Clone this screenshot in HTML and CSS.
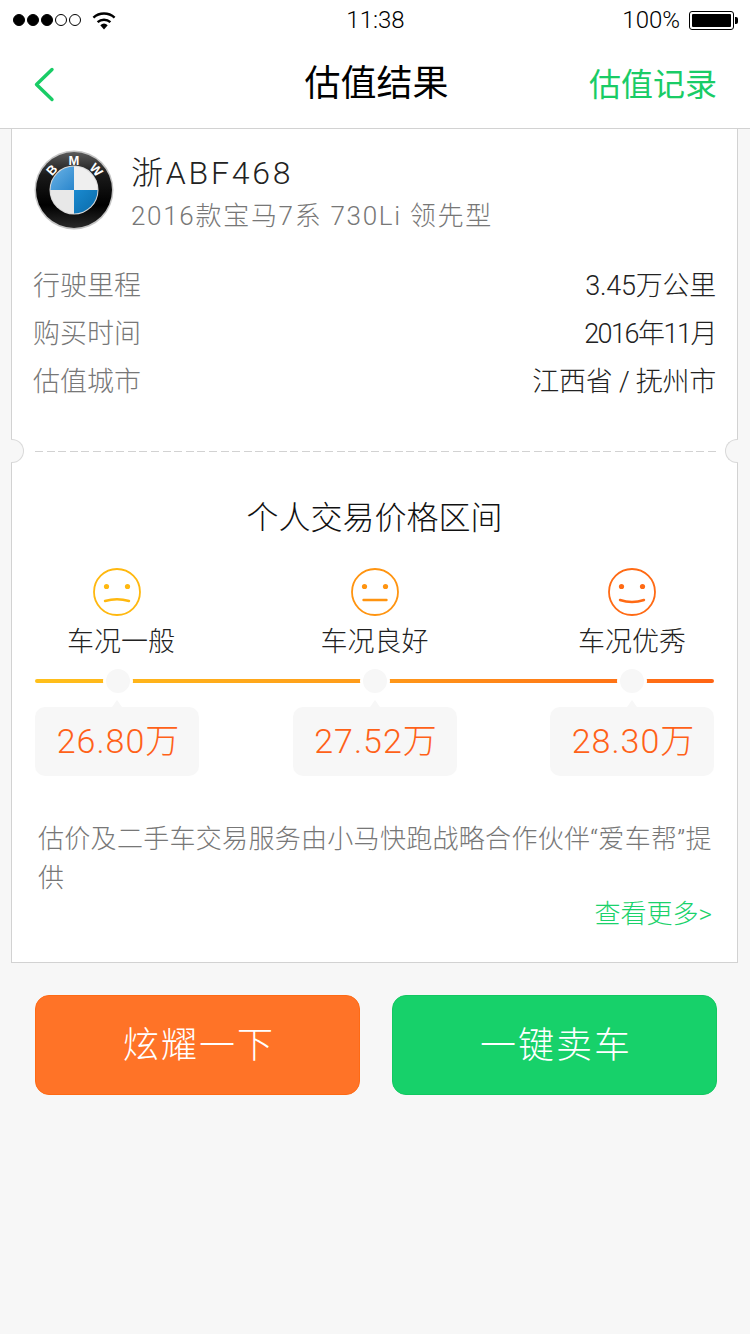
FILE: index.html
```html
<!DOCTYPE html>
<html lang="zh-CN">
  <head>
    <meta charset="UTF-8" />
    <meta name="viewport" content="width=device-width, initial-scale=1.0" />
    <title>估值结果</title>
    <link rel="stylesheet" href="styles.css">
  </head>
  <body>
    <header class="topbar">
      <div class="status">
        <div class="status-left">
          <span class="dot on"></span><span class="dot on"></span><span class="dot on"></span><span class="dot"></span><span class="dot"></span>
          <svg class="wifi" width="24" height="19" viewBox="0 0 24 19">
            <path d="M12 18.500 8.300 14.200a5.600 5.600 0 0 1 7.400 0Z" fill="#000" />
            <path d="M5.600 11.200a9.600 9.600 0 0 1 12.800 0" fill="none" stroke="#000" stroke-width="2.400" />
            <path d="M1.400 6.600a15.800 15.800 0 0 1 21.200 0" fill="none" stroke="#000" stroke-width="2.400" />
          </svg>
        </div>
        <div class="status-time">11:38</div>
        <div class="status-right">
          <span>100%</span>
          <span class="battery"><span class="battery-fill"></span></span>
        </div>
      </div>
      <nav class="navbar">
        <svg class="back" width="24" height="38" viewBox="0 0 24 38">
          <path d="M19 4.500 3.500 19.500 19 34.500" fill="none" stroke="#19cc66" stroke-width="3.400" stroke-linecap="round" stroke-linejoin="round" />
        </svg>
        <h1 class="nav-title">估值结果</h1>
        <a class="nav-link">估值记录</a>
      </nav>
    </header>

    <main class="card">
      <section class="car">
        <div class="car-head">
          <svg class="logo" width="80" height="80" viewBox="0 0 80 80">
            <defs>
              <linearGradient id="ring" x1="0" y1="0" x2="0" y2="1">
                <stop offset="0" stop-color="#5a5a5a" />
                <stop offset="0.3" stop-color="#1a1a1a" />
                <stop offset="0.7" stop-color="#000" />
                <stop offset="1" stop-color="#2a2a2a" />
              </linearGradient>
              <linearGradient id="blue1" x1="0" y1="0" x2="1" y2="1">
                <stop offset="0" stop-color="#6db4e6" />
                <stop offset="1" stop-color="#2a86cc" />
              </linearGradient>
              <linearGradient id="blue2" x1="0" y1="0" x2="1" y2="1">
                <stop offset="0" stop-color="#1a8ad0" />
                <stop offset="1" stop-color="#0a6aa8" />
              </linearGradient>
            </defs>
            <circle cx="40" cy="40" r="39.500" fill="#c4c4c4" />
            <circle cx="40" cy="40" r="38" fill="url(#ring)" />
            <text class="logo-text" x="40" y="14.500" text-anchor="middle" transform="rotate(-48 40 40)">B</text>
            <text class="logo-text" x="40" y="14.500" text-anchor="middle">M</text>
            <text class="logo-text" x="40" y="14.500" text-anchor="middle" transform="rotate(48 40 40)">W</text>
            <circle cx="40" cy="40" r="24.500" fill="#d8d8d8" />
            <path d="M40 40V16.500A23.500 23.500 0 0 0 16.500 40Z" fill="url(#blue1)" />
            <path d="M40 40V16.500A23.500 23.500 0 0 1 63.500 40Z" fill="#efefef" />
            <path d="M40 40V63.500A23.500 23.500 0 0 1 16.500 40Z" fill="#e8e8e8" />
            <path d="M40 40V63.500A23.500 23.500 0 0 0 63.500 40Z" fill="url(#blue2)" />
          </svg>
          <div class="car-names">
            <div class="plate">浙ABF468</div>
            <div class="model">2016款宝马7系 730Li 领先型</div>
          </div>
        </div>
        <dl class="facts">
          <div class="fact"><dt>行驶里程</dt><dd>3.45万公里</dd></div>
          <div class="fact"><dt>购买时间</dt><dd class="tight">2016年11月</dd></div>
          <div class="fact"><dt>估值城市</dt><dd>江西省 / 抚州市</dd></div>
        </dl>
      </section>

      <div class="tear">
        <span class="notch notch-left"></span>
        <span class="notch notch-right"></span>
      </div>

      <section class="price">
        <h2 class="price-title">个人交易价格区间</h2>
        <div class="levels">
          <div class="level level-first">
            <svg class="face" width="48" height="48" viewBox="0 0 48 48" fill="none" stroke="#ffb80f">
              <circle cx="24" cy="24" r="23" stroke-width="1.800" />
              <circle cx="13.500" cy="18.500" r="2.600" fill="#ffb80f" stroke="none" />
              <circle cx="34.500" cy="18.500" r="2.600" fill="#ffb80f" stroke="none" />
              <path d="M12 33q12-3.500 24 0" stroke-width="2.400" stroke-linecap="round" />
            </svg>
            <div class="level-name">车况一般</div>
            <span class="knob"></span>
            <div class="bubble">26.80万</div>
          </div>
          <div class="level">
            <svg class="face" width="48" height="48" viewBox="0 0 48 48" fill="none" stroke="#ff9410">
              <circle cx="24" cy="24" r="23" stroke-width="1.800" />
              <circle cx="13.500" cy="18.500" r="2.600" fill="#ff9410" stroke="none" />
              <circle cx="34.500" cy="18.500" r="2.600" fill="#ff9410" stroke="none" />
              <path d="M12.500 32h23" stroke-width="2.400" stroke-linecap="round" />
            </svg>
            <div class="level-name">车况良好</div>
            <span class="knob"></span>
            <div class="bubble">27.52万</div>
          </div>
          <div class="level">
            <svg class="face" width="48" height="48" viewBox="0 0 48 48" fill="none" stroke="#ff6a14">
              <circle cx="24" cy="24" r="23" stroke-width="1.800" />
              <circle cx="13.500" cy="18.500" r="2.600" fill="#ff6a14" stroke="none" />
              <circle cx="34.500" cy="18.500" r="2.600" fill="#ff6a14" stroke="none" />
              <path d="M12 32q12 4 24 0" stroke-width="2.400" stroke-linecap="round" />
            </svg>
            <div class="level-name">车况优秀</div>
            <span class="knob"></span>
            <div class="bubble">28.30万</div>
          </div>
        </div>
        <p class="note">估价及二手车交易服务由小马快跑战略合作伙伴“爱车帮”提供</p>
        <a class="more">查看更多&gt;</a>
      </section>
    </main>

    <div class="actions">
      <button class="btn btn-orange">炫耀一下</button>
      <button class="btn btn-green">一键卖车</button>
    </div>
  </body>
</html>
```

FILE: styles.css
```css
* {
  box-sizing: border-box;
}
html,
body {
  margin: 0;
  padding: 0;
}
body {
  width: 750px;
  min-height: 1334px;
  background-color: #f7f7f7;
  color: #222;
  font-family: "Roboto", "Noto Sans CJK SC", sans-serif;
  font-weight: 300;
}

/* top */
.topbar {
  background-color: #fff;
  border-bottom: 1px solid #d2d2d2;
}
.status {
  display: grid;
  grid-template-columns: 1fr auto 1fr;
  align-items: center;
  height: 40px;
  padding: 0 16px 0 13px;
  color: #000;
  font-size: 24px;
}
.status-left {
  display: flex;
  align-items: center;
  gap: 2px;
}
.status-time {
  margin-left: 4px;
}
.dot {
  width: 12px;
  height: 12px;
  border: 1px solid #000;
  border-radius: 50%;
}
.dot.on {
  background-color: #000;
}
.wifi {
  margin-left: 9px;
}
.status-right {
  display: flex;
  align-items: center;
  justify-content: flex-end;
  gap: 9px;
}
.battery {
  position: relative;
  width: 45px;
  height: 19px;
  padding: 2px;
  border: 1px solid #000;
  border-radius: 3px;
}
.battery::after {
  content: "";
  position: absolute;
  right: -5px;
  top: 5px;
  width: 3px;
  height: 7px;
  background-color: #000;
  border-radius: 0 2px 2px 0;
}
.battery-fill {
  display: block;
  height: 100%;
  background-color: #000;
  border-radius: 1px;
}
.navbar {
  display: grid;
  grid-template-columns: 1fr auto 1fr;
  align-items: center;
  height: 88px;
  padding: 0 33px;
}
.back {
  display: block;
}
.nav-title {
  margin: 0 0 0 3px;
  color: #000;
  font-size: 36px;
  font-weight: 400;
  line-height: 88px;
}
.nav-link {
  justify-self: end;
  margin-bottom: 4px;
  color: #19cc66;
  font-size: 32px;
  font-weight: 400;
}

/* card */
.card {
  width: 727px;
  margin: 0 0 0 11px;
  background-color: #fff;
  border: 1px solid #d2d2d2;
  border-top: none;
}
.car {
  padding: 21px 21px 0;
}
.car-head {
  display: flex;
  gap: 17px;
}
.logo {
  display: block;
  flex: none;
  margin-left: 1px;
}
.logo-text {
  fill: #fff;
  font-family: "Liberation Sans", sans-serif;
  font-size: 13px;
  font-weight: 700;
}
.car-names {
  padding-top: 1px;
}
.plate {
  font-size: 32px;
  letter-spacing: 2.750px;
  line-height: 44px;
}
.model {
  color: #777;
  font-size: 26px;
  letter-spacing: 1.700px;
  line-height: 42px;
}
.facts {
  margin: 25px 0 0;
}
.fact {
  display: flex;
  justify-content: space-between;
  font-size: 27px;
  line-height: 48px;
}
.fact dt {
  color: #777;
}
.fact dd {
  margin: 0;
  color: #222;
  letter-spacing: -0.250px;
}
.fact dd.tight {
  letter-spacing: -1.500px;
}

.tear {
  position: relative;
  height: 1px;
  margin: 45px 21px 0 23px;
  background: repeating-linear-gradient(90deg, #d2d2d2 0, #d2d2d2 8px, transparent 8px, transparent 11.600px);
}
.notch {
  position: absolute;
  top: -12px;
  width: 13px;
  height: 24px;
  background-color: #f7f7f7;
  border: 1px solid #d9d9d9;
}
.notch-left {
  left: -24px;
  border-left: none;
  border-radius: 0 12px 12px 0;
}
.notch-right {
  right: -22px;
  border-right: none;
  border-radius: 12px 0 0 12px;
}

/* price */
.price {
  padding: 44px 23px 30px;
}
.price-title {
  margin: 0;
  color: #111;
  font-size: 32px;
  font-weight: 300;
  line-height: 44px;
  text-align: center;
}
.levels {
  position: relative;
  display: flex;
  justify-content: space-between;
  margin-top: 28px;
}
.levels::before {
  content: "";
  position: absolute;
  left: 0;
  right: 0;
  top: 111px;
  height: 4px;
  border-radius: 2px;
  background: linear-gradient(90deg, #ffc01a, #ff9a1a 50%, #ff6414);
}
.level {
  position: relative;
  display: flex;
  flex-direction: column;
  align-items: center;
  width: 164px;
}
.face {
  display: block;
}
.level-name {
  margin-top: 4px;
  font-size: 27px;
  line-height: 44px;
}
.level-first .level-name {
  margin-left: 8px;
}
.knob {
  width: 30px;
  height: 30px;
  margin-top: 2px;
  background-color: #f7f7f7;
  border: 3px solid #fff;
  border-radius: 50%;
}
.level-first .knob {
  margin-left: 2px;
}
.bubble {
  position: relative;
  width: 164px;
  height: 69px;
  margin-top: 11px;
  padding-left: 3px;
  background-color: #f7f7f7;
  border-radius: 10px;
  color: #ff6118;
  font-size: 34px;
  letter-spacing: 1px;
  line-height: 69px;
  text-align: center;
}
.bubble::before {
  content: "";
  position: absolute;
  left: 77px;
  top: -7px;
  border-left: 5px solid transparent;
  border-right: 5px solid transparent;
  border-bottom: 7px solid #f7f7f7;
}
.note {
  margin: 44px 2px 0 3px;
  color: #777;
  font-size: 26px;
  letter-spacing: 0.300px;
  line-height: 39px;
}
.more {
  display: block;
  margin-top: -2px;
  margin-right: 2px;
  color: #1ad26b;
  font-size: 26px;
  line-height: 36px;
  text-align: right;
}

/* buttons */
.actions {
  display: flex;
  gap: 32px;
  padding: 32px 33px 0 35px;
}
.btn {
  flex: 1;
  height: 100px;
  padding: 0 0 6px 3px;
  border: 1px solid;
  border-radius: 14px;
  color: #fff;
  font-family: inherit;
  font-size: 36px;
  font-weight: 300;
  letter-spacing: 2px;
}
.btn-orange {
  background-color: #ff7327;
  border-color: #ff6a14;
}
.btn-green {
  background-color: #17d16a;
  border-color: #12c861;
}
```
